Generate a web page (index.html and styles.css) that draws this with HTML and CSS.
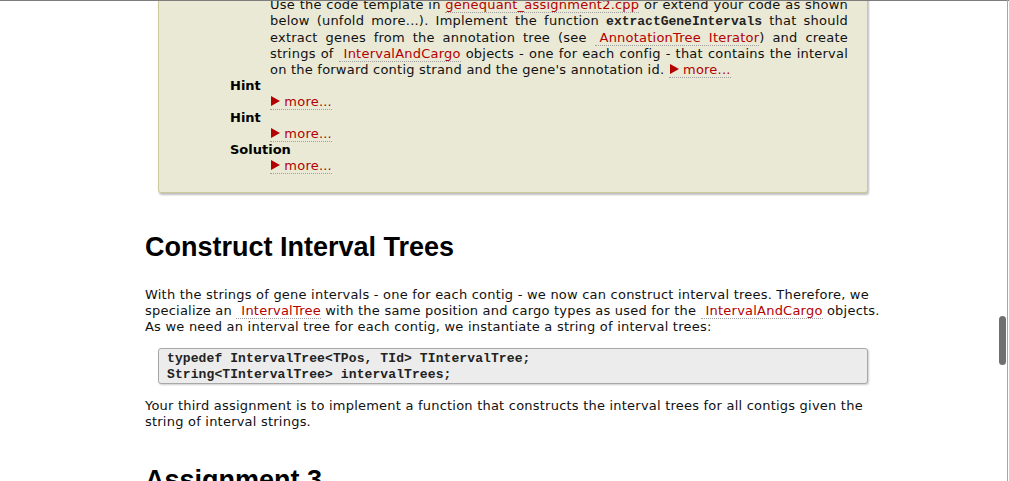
FILE: index.html
```html
<!DOCTYPE html>
<html lang="en">
<head>
<meta charset="utf-8">
<title>Construct Interval Trees</title>
<link rel="stylesheet" href="styles.css">
</head>
<body>
<main class="content">
  <section class="assignment">
    <dl class="steps">
      <dd class="step-text">
        <span class="jl">Use the code template in <a class="file" href="#">genequant_assignment2.cpp</a> or extend your code as shown</span>
        <span class="jl">below (unfold more...). Implement the function <code class="inline">extractGeneIntervals</code> that should</span>
        <span class="jl">extract genes from the annotation tree (see <a class="ref" href="#">AnnotationTree Iterator</a>) and create</span>
        <span class="jl">strings of <a class="ref" href="#">IntervalAndCargo</a> objects - one for each config - that contains the interval</span>
        <span class="ll">on the forward contig strand and the gene's annotation id. <a class="more" href="#"><span class="tri"></span> more...</a></span>
      </dd>
      <dt>Hint</dt>
      <dd><a class="more" href="#"><span class="tri"></span> more...</a></dd>
      <dt>Hint</dt>
      <dd><a class="more" href="#"><span class="tri"></span> more...</a></dd>
      <dt>Solution</dt>
      <dd><a class="more" href="#"><span class="tri"></span> more...</a></dd>
    </dl>
  </section>

  <h2>Construct Interval Trees</h2>
  <p>
    <span class="line">With the strings of gene intervals - one for each contig - we now can construct interval trees. Therefore, we</span>
    <span class="line">specialize an <a class="ref" href="#">IntervalTree</a> with the same position and cargo types as used for the <a class="ref" href="#">IntervalAndCargo</a> objects.</span>
    <span class="line">As we need an interval tree for each contig, we instantiate a string of interval trees:</span>
  </p>
  <pre class="code">typedef IntervalTree&lt;TPos, TId&gt; TIntervalTree;
String&lt;TIntervalTree&gt; intervalTrees;</pre>
  <p>
    <span class="line">Your third assignment is to implement a function that constructs the interval trees for all contigs given the</span>
    <span class="line">string of interval strings.</span>
  </p>
  <h2 class="next">Assignment 3</h2>
</main>
<div class="frame-top"></div>
<div class="frame-right"></div>
<div class="scroll-thumb"></div>
</body>
</html>
```

FILE: styles.css
```css
html, body {
  margin: 0;
  padding: 0;
  background: #ffffff;
  overflow: hidden;
}

body {
  font-family: "DejaVu Sans", Verdana, sans-serif;
  font-size: 13px;
  line-height: 16px;
  letter-spacing: 0.22px;
  color: #111111;
}

.content {
  width: 735px;
  margin: -20px 0 0 145px;
}

.assignment {
  margin: 0 12px 0 13px;
  padding: 16px 19px 18px 71px;
  background: #e9e9d6;
  border: 1px solid #c9c99c;
  border-radius: 0 0 3px 3px;
  box-shadow: 1px 2px 2px rgba(0, 0, 0, 0.25);
}

.steps {
  margin: 0;
}

.steps dt {
  font-weight: bold;
  color: #000;
  letter-spacing: 0;
}

.steps dd {
  margin: 0 0 0 40px;
}

.step-text {
  text-align: justify;
}

.jl {
  display: block;
  text-align: justify;
  text-align-last: justify;
}

.ll {
  display: block;
}

a {
  color: #b30000;
  text-decoration: none;
  border-bottom: 1px dotted #a0a0a0;
}

a.ref {
  padding-left: 5px;
}

.inline {
  font-family: "Liberation Mono", "Courier New", monospace;
  font-weight: bold;
  font-size: 13px;
  letter-spacing: 0;
  color: #222;
}

.more {
  display: inline-block;
  line-height: 14px;
}

.tri {
  display: inline-block;
  width: 0;
  height: 0;
  border-top: 5px solid transparent;
  border-bottom: 5px solid transparent;
  border-left: 9px solid #b30000;
  vertical-align: 0;
  margin-left: 1px;
}

h2 {
  font-family: "Liberation Sans", Arial, sans-serif;
  font-weight: bold;
  font-size: 27px;
  line-height: 30px;
  letter-spacing: 0;
  margin: 39px 0 25px 0;
  color: #000;
}

h2.next {
  margin-top: 35px;
}

p {
  margin: 0;
}

.line {
  display: block;
  white-space: nowrap;
}

.code {
  margin: 13px 12px 14px 13px;
  padding: 2px 8px 0 8px;
  background: #ececec;
  border: 1px solid #a8a8a8;
  border-radius: 3px;
  box-shadow: 1px 1px 2px rgba(0, 0, 0, 0.2);
  font-family: "Liberation Mono", "Courier New", monospace;
  font-weight: bold;
  font-size: 13px;
  line-height: 16px;
  letter-spacing: 0.1px;
  color: #222;
}

.frame-top {
  position: fixed;
  left: 0;
  top: 0;
  width: 100%;
  height: 1px;
  background: #7d7d7d;
}

.frame-right {
  position: fixed;
  top: 0;
  left: 1007px;
  width: 1px;
  height: 100%;
  background: #a6a6a6;
}

.scroll-thumb {
  position: fixed;
  left: 999px;
  top: 316px;
  width: 7px;
  height: 49px;
  border-radius: 4px;
  background: #6f6f6f;
}
```
